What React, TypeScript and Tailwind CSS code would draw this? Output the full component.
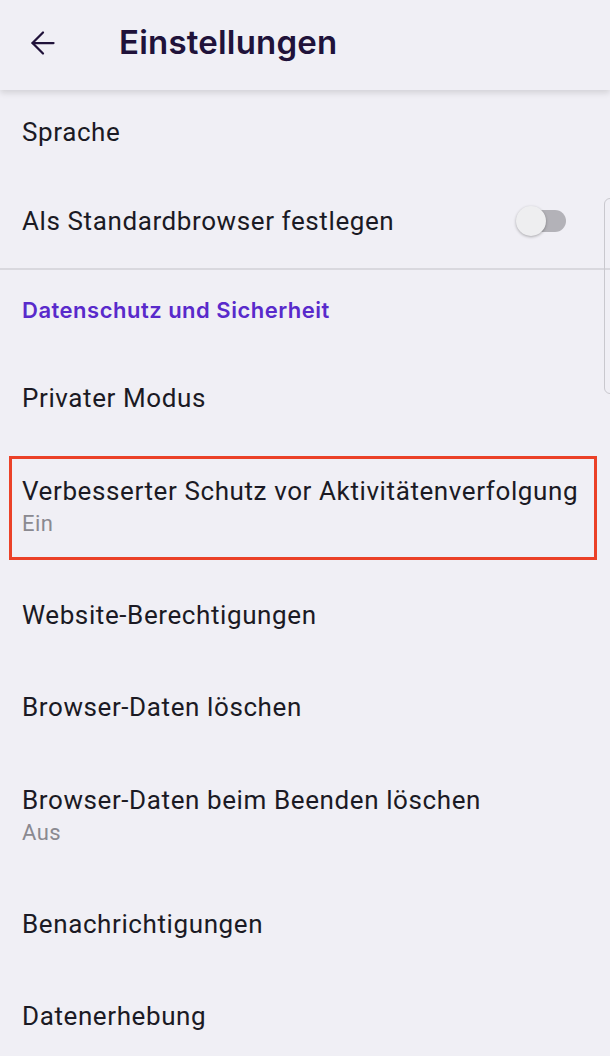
import { ArrowLeft } from "lucide-react";

type Item = { title: string; summary?: string; highlight?: boolean };

const privacyItems: Item[] = [
  { title: "Privater Modus" },
  { title: "Verbesserter Schutz vor Aktivitätenverfolgung", summary: "Ein", highlight: true },
  { title: "Website-Berechtigungen" },
  { title: "Browser-Daten löschen" },
  { title: "Browser-Daten beim Beenden löschen", summary: "Aus" },
  { title: "Benachrichtigungen" },
  { title: "Datenerhebung" },
];

const Row = ({ item }: { item: Item }) => {
  if (item.summary) {
    return (
      <div className="relative px-[22px] pt-[31px] pb-[28px]">
        <div className="text-[26px] leading-[32px] tracking-[0.6px] text-[#1b1a24]">{item.title}</div>
        <div className="text-[22px] leading-[34px] tracking-[0.4px] text-[#8a8990]">{item.summary}</div>
        {/* annotation box from the screenshot */}
        {item.highlight && (
          <div className="absolute inset-x-0 top-[12px] bottom-[9px] ml-[9px] mr-[13px] border-[3px] border-[#eb4128]" />
        )}
      </div>
    );
  }
  return (
    <div className="flex h-[92px] items-center px-[22px] text-[26px] tracking-[0.6px] text-[#1b1a24]">
      {item.title}
    </div>
  );
};

const App = () => {
  return (
    <div
      className="relative h-[1056px] w-[610px] overflow-hidden bg-[#f0eff5]"
      style={{ fontFamily: "Roboto, 'Noto Sans', sans-serif" }}
    >
      <header className="relative z-10 flex h-[90px] items-center bg-[#f0eff5] pb-1 shadow-[0_3px_6px_rgba(0,0,0,0.12)]">
        <ArrowLeft className="ml-[25px] h-[36px] w-[36px] text-[#20123a]" strokeWidth={1.5} />
        <h1
          className="ml-[58px] text-[33px] font-semibold tracking-[0.2px] text-[#20123a]"
          style={{ fontFamily: "Inter, sans-serif" }}
        >
          Einstellungen
        </h1>
      </header>

      <div className="flex h-[84px] items-center px-[22px] text-[26px] tracking-[0.6px] text-[#1b1a24]">
        Sprache
      </div>
      <div className="flex h-[96px] items-center justify-between border-b-2 border-[#d9d8de] pl-[22px] pr-[44px]">
        <span className="text-[26px] tracking-[0.6px] text-[#1b1a24]">Als Standardbrowser festlegen</span>
        <div className="flex items-center">
          <div className="relative z-10 h-[30px] w-[30px] rounded-full bg-[#eeeef0] shadow-[0_1px_3px_rgba(0,0,0,0.3)]" />
          <div className="-ml-[20px] h-[22px] w-[40px] rounded-full bg-[#b3b2b8]" />
        </div>
      </div>

      <div
        className="h-[82px] px-[22px] pt-[24px] text-[22px] font-semibold tracking-[0.5px] text-[#592acb]"
        style={{ fontFamily: "Inter, sans-serif" }}
      >
        Datenschutz und Sicherheit
      </div>

      {privacyItems.map((item) => (
        <Row key={item.title} item={item} />
      ))}

      {/* scroll indicator at the right edge */}
      <div className="absolute right-[-6px] top-[198px] h-[196px] w-[12px] rounded-[6px] border border-[#c9c8ce]" />
    </div>
  );
};

export default App;
